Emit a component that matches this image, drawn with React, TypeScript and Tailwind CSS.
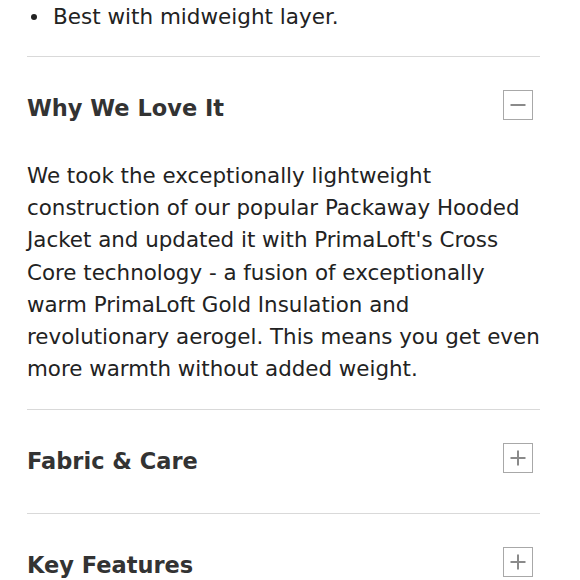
import React from "react";

const FONT = { fontFamily: '"DejaVu Sans", "Noto Sans", sans-serif' };

const LINES = [
  "We took the exceptionally lightweight",
  "construction of our popular Packaway Hooded",
  "Jacket and updated it with PrimaLoft's Cross",
  "Core technology - a fusion of exceptionally",
  "warm PrimaLoft Gold Insulation and",
  "revolutionary aerogel. This means you get even",
  "more warmth without added weight.",
];

function ToggleIcon({ open }: { open: boolean }) {
  return (
    <span className="mb-[8px] flex h-[30px] w-[30px] items-center justify-center border-[1.5px] border-[#a8a8a8]">
      <svg width="18" height="18" viewBox="0 0 18 18" fill="none">
        <path d="M1.5 9h15" stroke="#8a8a8a" strokeWidth="2" />
        {!open && <path d="M9 1.5v15" stroke="#8a8a8a" strokeWidth="2" />}
      </svg>
    </span>
  );
}

function Section({ title, open, children }: { title: string; open?: boolean; children?: React.ReactNode }) {
  return (
    <div className="border-t border-[#d9d9d9]">
      <div className="flex h-[103px] items-center justify-between pr-[7px]">
        <h3 className="text-[22.5px] font-bold text-[#333]">{title}</h3>
        <ToggleIcon open={!!open} />
      </div>
      {open && children}
    </div>
  );
}

export default function App() {
  return (
    <div className="h-[580px] w-[580px] overflow-hidden bg-white text-[#222]" style={FONT}>
      <div className="pl-[27px] pr-[40px]">
        <div className="mt-[1px] mb-[23px] flex items-center text-[21.5px] leading-[32px]">
          <span className="ml-[4px] mr-[16px] h-[6px] w-[6px] rounded-full bg-[#222]" />
          <span>Best with midweight layer.</span>
        </div>
        <Section title="Why We Love It" open>
          <p className="whitespace-nowrap pb-[24px] text-[21.4px] leading-[32.2px]">
            {LINES.map((l, i) => (
              <span key={i}>
                {l}
                {i < LINES.length - 1 && <br />}
              </span>
            ))}
          </p>
        </Section>
        <Section title="Fabric & Care" />
        <Section title="Key Features" />
      </div>
    </div>
  );
}
